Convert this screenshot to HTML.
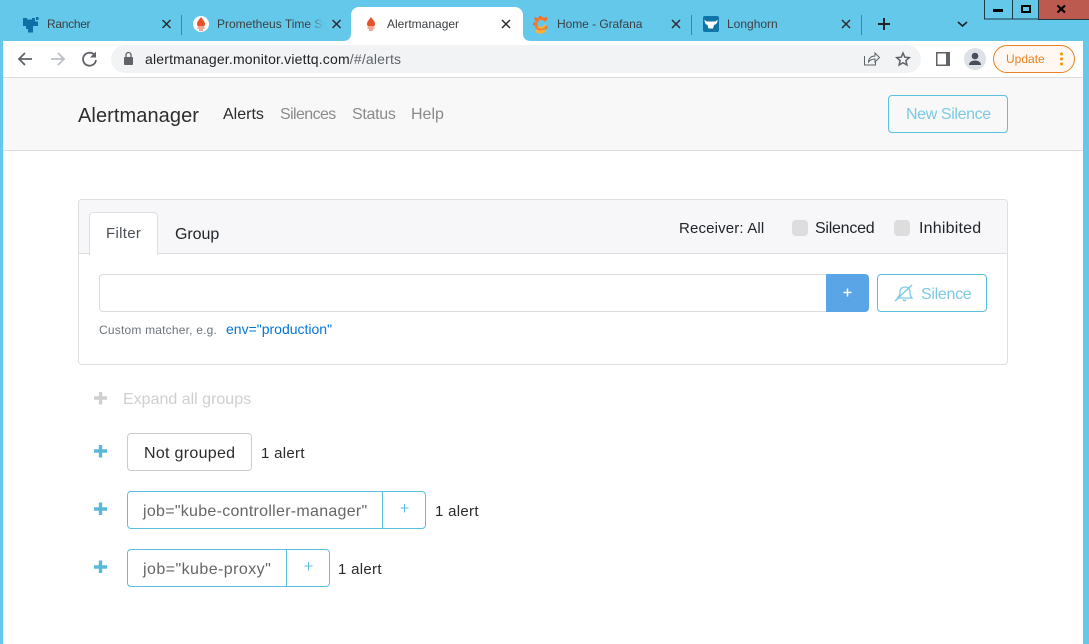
<!DOCTYPE html>
<html><head><meta charset="utf-8"><style>
html,body{margin:0;padding:0;width:1089px;height:644px;overflow:hidden;background:#fff}
body{position:relative;font-family:"Liberation Sans",sans-serif;color:#212529}
.a{position:absolute;box-sizing:border-box}
.t{position:absolute;white-space:nowrap;line-height:20px;height:20px}
svg{position:absolute;overflow:visible}
</style></head><body>
<!-- frame -->
<div class="a" style="left:0;top:0;width:1089px;height:41px;background:#64c8eb"></div>
<div class="a" style="left:0;top:41px;width:3px;height:603px;background:#64c8eb"></div>
<div class="a" style="left:1083px;top:41px;width:6px;height:603px;background:#64c8eb"></div>
<!-- toolbar -->
<div class="a" style="left:3px;top:41px;width:1080px;height:37px;background:#fff;border-bottom:1px solid #dadce0"></div>
<!-- active tab -->
<div class="a" style="left:351px;top:7px;width:172px;height:34px;background:#fff;border-radius:8px 8px 0 0"></div>
<svg style="left:0;top:0" width="1089" height="78">
<path d="M343 41q8 0 8-8v8zM531 41q-8 0-8-8v8z" fill="#fff"/>
<!-- separators -->
<path d="M181.500 15v20M691.500 15v20M861.500 15v20" stroke="#4d7f95" stroke-width="1"/>
<!-- rancher -->
<path d="M23 18h4v1.500h5V18h3v3.500h3V26h-5v6.500h-5V29h-2v-3h-3z" fill="#0f6ea6"/>
<path d="M36 17h2.500v3H36z" fill="#0f6ea6"/>
<!-- prometheus tab -->
<circle cx="201" cy="24" r="8" fill="#fff"/>
<path d="M201 17c1 2 4 4 4 7 0 1-.500 2-1 2.500h-6c-.500-.500-1-1.500-1-2.500 0-3 3-5 4-7zM197.500 27.500h7v1h-7zM199 29.500h4v1h-4z" fill="#e6522c"/>
<!-- alertmanager tab -->
<path d="M371 17c1 2 4 4 4 7 0 1-.500 2-1 2.500h-6c-.500-.500-1-1.500-1-2.500 0-3 3-5 4-7zM367.500 27.500h7v1h-7zM369 29.500h4v1h-4z" fill="#e6522c"/>
<!-- grafana -->
<path d="M546 21a5.500 5.500 0 1 0 .500 5" fill="none" stroke="#f47a2c" stroke-width="3"/>
<path d="M545 24.500a4 4 0 0 1-7 2" fill="none" stroke="#fbb03b" stroke-width="2"/>
<path d="M535 31.500a8 8 0 0 0 11 0l-1.500-2.500a6 6 0 0 1-8 0z" fill="#fbb03b"/>
<path d="M534.500 18l2.500 1.500M540 16v2.500M547 17.500l-2 2M533 24h2" stroke="#ef6a2b" stroke-width="2.200"/>
<!-- longhorn -->
<rect x="703" y="16" width="16" height="16" rx="2" fill="#0f75a8"/>
<path d="M704.500 19.500c1 1.500 2 2 3.500 2h6c1.500 0 2.500-.500 3.500-2 .5 3-1.500 5-3.500 5.500l-1 3.500h-4.500l-1-3.500c-2-.5-3-2.500-3-5.500z" fill="#fff"/>
<!-- closes -->
<g stroke="#2a2d30" stroke-width="1.500" fill="none">
<path d="M162.500 20l8 8M170.500 20l-8 8"/>
<path d="M332.500 20l8 8M340.500 20l-8 8"/>
<path d="M502 20l8 8M510 20l-8 8"/>
<path d="M672 20l8 8M680 20l-8 8"/>
<path d="M842 20l8 8M850 20l-8 8"/>
</g>
<path d="M884 18v12M878 24h12" stroke="#202326" stroke-width="2" fill="none"/>
<path d="M958 22l4.500 4 4.500-4" stroke="#202326" stroke-width="1.600" fill="none"/>
<!-- window buttons -->
<rect x="984.500" y="-1" width="28" height="20" fill="none" stroke="#1f3a44"/>
<rect x="1012.500" y="-1" width="26" height="20" fill="none" stroke="#1f3a44"/>
<rect x="1039" y="0" width="50" height="19" fill="#bc5a50"/>
<path d="M1038.500 0v19.500H1089" stroke="#1f3a44" fill="none"/>
<rect x="993" y="9" width="10" height="3" fill="#000"/>
<rect x="1022" y="6" width="8" height="6" fill="none" stroke="#000" stroke-width="2"/>
<path d="M1057.500 5.500l7.500 7M1065 5.500l-7.500 7" stroke="#000" stroke-width="2.200"/>
<!-- url pill -->
<rect x="111" y="45" width="810" height="28" rx="14" fill="#f1f3f4"/>
<!-- nav -->
<path d="M32 59H19M25 53l-6 6 6 6" stroke="#5f6368" stroke-width="1.800" fill="none"/>
<path d="M51 59h13M58 53l6 6-6 6" stroke="#bcc0c4" stroke-width="1.800" fill="none"/>
<path d="M94.500 55a6.500 6.500 0 1 0 1.500 5" stroke="#5f6368" stroke-width="1.800" fill="none"/>
<path d="M96 51.500v6h-6z" fill="#5f6368"/>
<!-- lock -->
<rect x="124" y="57" width="9" height="8" rx="1" fill="#5f6368"/>
<path d="M126 57v-2a2.500 2.500 0 0 1 5 0v2" stroke="#5f6368" stroke-width="1.300" fill="none"/>
<!-- share -->
<path d="M864.500 56v9h11v-3M868.500 62c0-4 3-6 6.500-6v-3l4.500 4.500-4.500 4.500v-3c-3 0-5 1-6.500 3z" stroke="#5f6368" stroke-width="1" fill="none"/>
<!-- star -->
<path d="M903 53l1.800 4.200 4.500.4-3.400 3 1 4.400-3.900-2.300-3.900 2.300 1-4.400-3.400-3 4.500-.4z" stroke="#5f6368" stroke-width="1.500" fill="none"/>
<!-- side panel -->
<rect x="936" y="52" width="14" height="14" fill="#5f6368"/>
<rect x="937.500" y="53.500" width="8.500" height="11" fill="#fff"/>
<!-- avatar -->
<circle cx="975" cy="59" r="11" fill="#dee1e6"/>
<circle cx="975" cy="56" r="3.300" fill="#474f5e"/>
<path d="M969 65c0-3 3-4.500 6-4.500s6 1.500 6 4.500z" fill="#474f5e"/>
<!-- update -->
<rect x="993.500" y="45.500" width="81" height="27" rx="13.500" fill="#fff8f2" stroke="#e8811f"/>
<circle cx="1061.500" cy="54" r="1.500" fill="#f29900"/><circle cx="1061.500" cy="59" r="1.500" fill="#f29900"/><circle cx="1061.500" cy="64" r="1.500" fill="#f29900"/>
</svg>
<!-- tab text -->
<div class="t" style="left:47px;top:14px;font-size:12px;color:#3c4043;letter-spacing:-.3px">Rancher</div>
<div class="t" style="left:217px;top:14px;font-size:12px;color:#3c4043;width:107px;overflow:hidden;-webkit-mask-image:linear-gradient(90deg,#000 85%,transparent)">Prometheus Time Series</div>
<div class="t" style="left:387px;top:14px;font-size:12px;color:#3c4043">Alertmanager</div>
<div class="t" style="left:557px;top:14px;font-size:12px;color:#3c4043;letter-spacing:-.05px">Home - Grafana</div>
<div class="t" style="left:727px;top:14px;font-size:12px;color:#3c4043">Longhorn</div>
<div class="t" style="left:145px;top:49px;font-size:14px;color:#202124;letter-spacing:.18px">alertmanager.monitor.viettq.com<span style="color:#5f6368">/#/alerts</span></div>
<div class="t" style="left:1006px;top:49px;font-size:12px;color:#e8811f">Update</div>

<!-- navbar -->
<div class="a" style="left:3px;top:78px;width:1080px;height:73px;background:#f8f8f8;border-bottom:1px solid #dcdcdc"></div>
<div class="t" style="left:78px;top:106px;font-size:20px;color:#2e2e2e;line-height:20px;letter-spacing:.08px">Alertmanager</div>
<div class="t" style="left:223px;top:105px;font-size:16px;color:#2a2a2a">Alerts</div>
<div class="t" style="left:280px;top:105px;font-size:16px;color:#8a8a8a;letter-spacing:-.6px">Silences</div>
<div class="t" style="left:352px;top:105px;font-size:16px;color:#8a8a8a;letter-spacing:-.3px">Status</div>
<div class="t" style="left:411px;top:105px;font-size:16px;color:#8a8a8a">Help</div>
<div class="a" style="left:888px;top:95px;width:120px;height:38px;border:1px solid #5bc0de;border-radius:4px"></div>
<div class="t" style="left:906px;top:105px;font-size:16px;color:#7cc9e6;letter-spacing:-.38px">New Silence</div>

<!-- card -->
<div class="a" style="left:78px;top:199px;width:930px;height:166px;border:1px solid #dfdfdf;border-radius:4px;background:#fff"></div>
<div class="a" style="left:79px;top:200px;width:928px;height:54px;background:#f7f7f9;border-bottom:1px solid #dfdfdf;border-radius:3px 3px 0 0"></div>
<div class="a" style="left:89px;top:212px;width:69px;height:43px;background:#fff;border:1px solid #dfdfdf;border-bottom:0;border-radius:4px 4px 0 0"></div>
<div class="t" style="left:106px;top:224px;font-size:15px;color:#495057;letter-spacing:.3px">Filter</div>
<div class="t" style="left:175px;top:225px;font-size:16px;color:#212529;letter-spacing:-.05px">Group</div>
<div class="t" style="left:679px;top:219px;font-size:15px;color:#212529;letter-spacing:.15px">Receiver: All</div>
<div class="a" style="left:792px;top:220px;width:16px;height:16px;background:#dddddd;border-radius:4px"></div>
<div class="t" style="left:815px;top:219px;font-size:16px;color:#212529;letter-spacing:-.25px">Silenced</div>
<div class="a" style="left:894px;top:220px;width:16px;height:16px;background:#dddddd;border-radius:4px"></div>
<div class="t" style="left:919px;top:219px;font-size:16px;color:#212529;letter-spacing:.2px">Inhibited</div>
<div class="a" style="left:99px;top:274px;width:728px;height:38px;border:1px solid #dcdcdc;border-right:0;border-radius:4px 0 0 4px"></div>
<div class="a" style="left:826px;top:274px;width:43px;height:38px;background:#5aa5e6;border-radius:0 4px 4px 0"></div>
<svg style="left:0;top:0" width="1089" height="644"><path d="M847.500 288.500v8M843.500 292.500h8" stroke="#fff" stroke-width="1.500"/></svg>
<div class="a" style="left:877px;top:274px;width:110px;height:38px;border:1px solid #5bc0de;border-radius:4px"></div>
<svg style="left:894px;top:284px" width="20" height="18">
<path d="M3 14c2-1 3-3 3-6 0-3 2-5 5-5s4 1 5 4c0 3 0 5 2 7z M9 15.500c.500 1.500 2.500 1.500 3 0" stroke="#7cc9e6" stroke-width="1.300" fill="none"/>
<path d="M1 17L18 1" stroke="#7cc9e6" stroke-width="1.500"/>
</svg>
<div class="t" style="left:921px;top:285px;font-size:16px;color:#7cc9e6;letter-spacing:-.3px">Silence</div>
<div class="t" style="left:99px;top:320px;font-size:12px;color:#6c757d;letter-spacing:.2px">Custom matcher, e.g.</div>
<div class="t" style="left:226px;top:319px;font-size:14px;color:#0275d8">env="production"</div>

<!-- groups -->
<svg style="left:0;top:0" width="1089" height="644">
<path d="M100.500 392v12.500M94 398h13" stroke="#cfcfcf" stroke-width="3.400" fill="none"/>
<path d="M100.500 445v12.500M94 451h13" stroke="#5bb8da" stroke-width="3.400" fill="none"/>
<path d="M100.500 502.500v12.500M94 509h13" stroke="#5bb8da" stroke-width="3.400" fill="none"/>
<path d="M100.500 560.500v12.500M94 567h13" stroke="#5bb8da" stroke-width="3.400" fill="none"/>
<path d="M404.500 504v8.500M400.500 508h8M308.500 562v8.500M304.500 566h8" stroke="#5bc0de" stroke-width="1"/>
</svg>
<div class="t" style="left:123px;top:390px;font-size:16px;color:#cfcfcf">Expand all groups</div>
<div class="a" style="left:127px;top:433px;width:125px;height:38px;border:1px solid #ccc;border-radius:4px"></div>
<div class="t" style="left:144px;top:444px;font-size:16px;color:#292b2c;letter-spacing:.3px">Not grouped</div>
<div class="t" style="left:261px;top:444px;font-size:15px;color:#292b2c;letter-spacing:.3px">1 alert</div>

<div class="a" style="left:127px;top:491px;width:299px;height:38px;border:1px solid #5bc0de;border-radius:4px"></div>
<div class="a" style="left:382px;top:491px;width:1px;height:38px;background:#5bc0de"></div>
<div class="t" style="left:143px;top:502px;font-size:16px;color:#666;letter-spacing:.28px">job="kube-controller-manager"</div>
<div class="t" style="left:435px;top:502px;font-size:15px;color:#292b2c;letter-spacing:.3px">1 alert</div>

<div class="a" style="left:127px;top:549px;width:203px;height:38px;border:1px solid #5bc0de;border-radius:4px"></div>
<div class="a" style="left:286px;top:549px;width:1px;height:38px;background:#5bc0de"></div>
<div class="t" style="left:143px;top:560px;font-size:16px;color:#666;letter-spacing:.44px">job="kube-proxy"</div>
<div class="t" style="left:338px;top:560px;font-size:15px;color:#292b2c;letter-spacing:.3px">1 alert</div>
</body></html>
